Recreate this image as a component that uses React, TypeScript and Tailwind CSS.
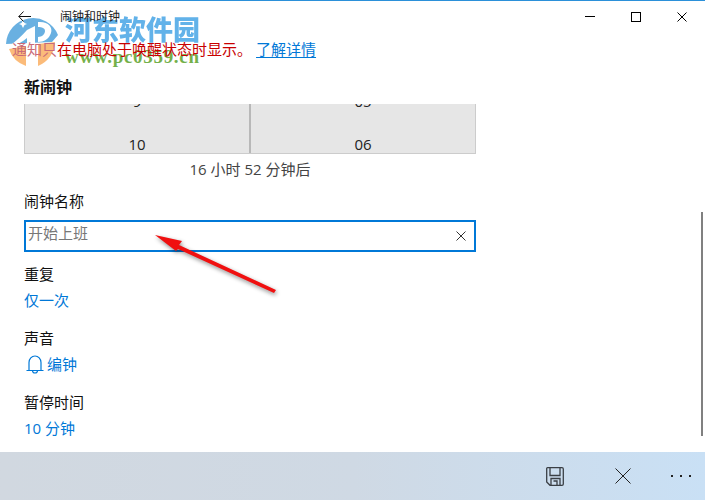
const font = { fontFamily: '"Open Sans", "Noto Sans CJK SC", sans-serif' };

function Cross({ size, color, width = 1 }: { size: number; color: string; width?: number }) {
  return (
    <svg width={size} height={size} viewBox={`0 0 ${size} ${size}`} className="shrink-0">
      <path d={`M0.5 0.5 L${size - 0.5} ${size - 0.5} M${size - 0.5} 0.5 L0.5 ${size - 0.5}`} stroke={color} strokeWidth={width} fill="none" />
    </svg>
  );
}

function Label({ text, className }: { text: string; className: string }) {
  return <div className={`h-[22px] text-[15px] leading-[22px] text-[#111] ${className}`}>{text}</div>;
}

function Value({ text, className }: { text: string; className: string }) {
  return <div className={`h-[22px] text-[15px] leading-[22px] text-[#0078d7] ${className}`}>{text}</div>;
}

export default function App() {
  return (
    <div className="relative flex h-[500px] w-[705px] flex-col overflow-hidden bg-white" style={font}>
      <div className="h-px bg-[#2b90d9]" />

      {/* title bar */}
      <div className="relative z-10 flex h-[31px] items-center">
        <svg width="13" height="11" viewBox="0 0 13 11" className="ml-[18px] shrink-0">
          <path d="M5.5 0.5 L0.8 5.5 L5.5 10.5 M0.8 5.5 L13 5.5" stroke="#111" strokeWidth="1" fill="none" />
        </svg>
        <div className="ml-[29px] text-xs text-[#222]">闹钟和时钟</div>
        <div className="ml-auto flex items-center">
          <div className="mr-[36px] h-px w-[10px] bg-black" />
          <div className="mr-[36px] h-[10px] w-[10px] border border-black" />
          <div className="mr-[18px]">
            <Cross size={10} color="#000" />
          </div>
        </div>
      </div>

      {/* content */}
      <div className="relative flex flex-1 flex-col pl-[24px]">
        <div className="relative z-10 mt-[6px] -ml-[12px] flex h-[22px] items-center text-[15px] leading-[22px]">
          <span className="text-[#c96a78]">通知只</span>
          <span className="text-[#c80000]">在电脑处于唤醒状态时显示。</span>
          <span className="ml-[4px] text-[#0078d7] underline underline-offset-2">了解详情</span>
        </div>

        <div className="mt-[16px] h-[22px] text-[16px] leading-[22px] font-bold text-[#111]">新闹钟</div>

        {/* time picker, scrolled */}
        <div className="mt-[6px] flex h-[50px] w-[452px] overflow-hidden border-x border-b border-[#cccccc] bg-[#e6e6e6] text-[15px] text-[#222]">
          <div className="flex flex-1 flex-col items-center justify-end">
            <div className="mb-[23px] leading-[20px]">9</div>
            <div className="-mb-px leading-[20px]">10</div>
          </div>
          <div className="w-[2px] bg-[#b8b8b8]" />
          <div className="flex flex-1 flex-col items-center justify-end">
            <div className="mb-[23px] leading-[20px]">05</div>
            <div className="-mb-px leading-[20px]">06</div>
          </div>
        </div>

        <div className="mt-[5px] h-[20px] w-[452px] text-center text-[15px] leading-[20px] text-[#444]">16 小时 52 分钟后</div>

        <Label text="闹钟名称" className="mt-[11px]" />

        <div className="mt-[8px] flex h-[32px] w-[452px] items-center border-2 border-[#0078d7] pr-[8px] pl-[2px]">
          <span className="-mt-[6px] text-[15px] text-[#777]">开始上班</span>
          <div className="ml-auto">
            <Cross size={10} color="#333" />
          </div>
        </div>

        <Label text="重复" className="mt-[11px]" />
        <Value text="仅一次" className="mt-[4px]" />
        <Label text="声音" className="mt-[16px]" />
        <div className="mt-[4px] flex h-[22px] items-center">
          <svg width="18" height="19" viewBox="0 0 18 19" className="ml-[2px] shrink-0">
            <path d="M3 15.5 V7.5 A6 6.5 0 0 1 15 7.5 V15.5 M0.5 15.5 H17.5 M6.5 15.5 A2.5 2.5 0 0 0 11.5 15.5" stroke="#0078d7" strokeWidth="1.2" fill="none" />
          </svg>
          <Value text="编钟" className="ml-[3px]" />
        </div>
        <Label text="暂停时间" className="mt-[16px]" />
        <Value text="10 分钟" className="mt-[4px]" />

        <div className="absolute top-[180px] right-[2px] h-[224px] w-[2px] bg-[#808080]" />
      </div>

      {/* command bar */}
      <div className="flex h-[48px] items-center bg-gradient-to-r from-[#d1d8e0] via-[#cfd9e4] to-[#c9e0f5]">
        <div className="ml-auto flex items-center">
          <svg width="18" height="19" viewBox="0 0 18 19" className="mr-[51px] shrink-0">
            <path d="M1.5 0.7 H16 A1.3 1.3 0 0 1 17.3 2 V17 A1.3 1.3 0 0 1 16 18.3 H4 L0.7 15 V1.5 A0.8 0.8 0 0 1 1.5 0.7 Z M4 0.7 V8.5 H14 V0.7 M5 18.3 V11.5 H14 V18.3 M7.5 14 H11 V18.3" stroke="#3a3f45" strokeWidth="1.3" fill="none" />
          </svg>
          <div className="mr-[40px]">
            <Cross size={16} color="#222" />
          </div>
          <div className="mr-[14px] flex gap-[7px]">
            <span className="h-[2px] w-[2px] bg-[#222]" />
            <span className="h-[2px] w-[2px] bg-[#222]" />
            <span className="h-[2px] w-[2px] bg-[#222]" />
          </div>
        </div>
      </div>

      {/* watermark */}
      <svg className="absolute top-0 left-0 opacity-85" width="70" height="70" viewBox="0 0 70 70">
        <path d="M6 44 A27 27 0 0 1 58 35 L52 42 L6 44 Z" fill="#4fa3dc" />
        <path d="M9 49 L26 46 L26 66 A27 27 0 0 1 9 49 Z" fill="#fbb063" />
        <path d="M38 44 L55 42 A27 27 0 0 1 38 66 Z" fill="#fbb063" />
        <path d="M8 47 C16 41 22 36 27 30 L35 26 L35 58 L27 58 L27 38 C22 42 16 46 8 47 Z" fill="#ffffff" />
        <path d="M38 22 C48 21 53 27 51 33 C49 39 44 42 38 42 L38 37 C42 37 45 34 45 31 C45 28 42 27 38 27 Z" fill="#ffffff" />
        <path d="M23 20 L24.5 23 L27 24 L24.5 25 L23 28 L21.5 25 L19 24 L21.5 23 Z" fill="#ffffff" />
      </svg>
      <div className="absolute top-[11px] left-[65px] text-[27px] leading-[36px] font-black text-[#5aaee8] opacity-95 [font-family:'Noto_Sans_CJK_SC',sans-serif]">河东软件园</div>
      <div className="absolute top-[45px] left-[65px] text-[19px] leading-[24px] font-bold tracking-[0.7px] text-[#74b04a] [font-family:'Liberation_Serif',serif]">www.pc0359.cn</div>

      {/* annotation arrow */}
      <svg className="absolute top-0 left-0 drop-shadow-[1px_2px_2px_rgba(0,0,0,0.45)]" width="705" height="500" viewBox="0 0 705 500">
        <path d="M155 235 L182 241 L179 245 L276 290 L274 293 L178 249 L176 251 Z" fill="#f01010" />
      </svg>
    </div>
  );
}
